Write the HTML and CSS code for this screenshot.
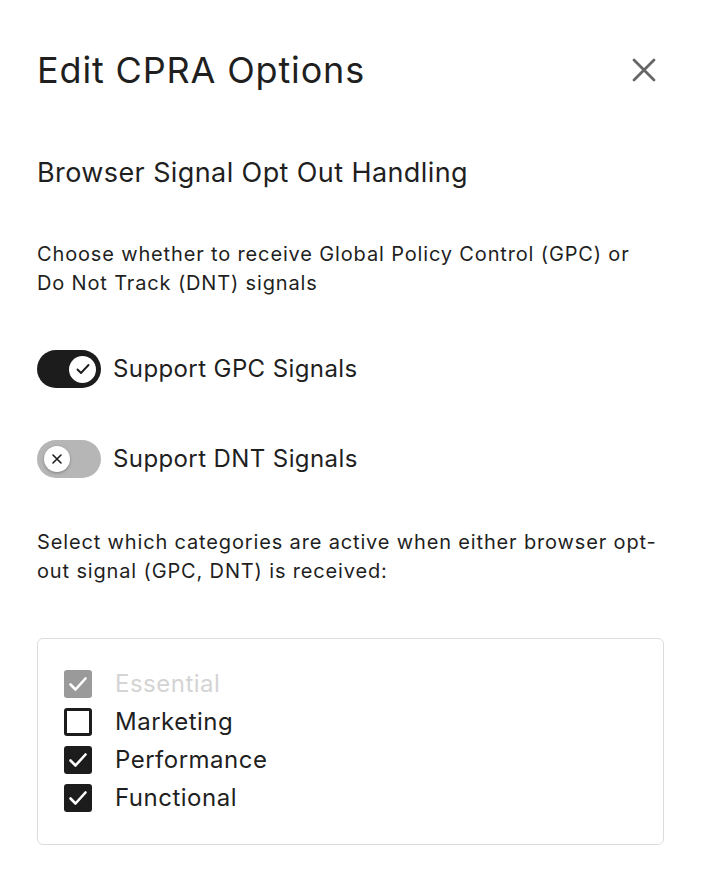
FILE: index.html
```html
<!DOCTYPE html>
<html lang="en">
<head>
<meta charset="utf-8">
<title>Edit CPRA Options</title>
<link rel="stylesheet" href="styles.css">
</head>
<body>
<div class="modal">
  <header class="modal-header">
    <h1 class="title">Edit CPRA Options</h1>
    <button class="close" aria-label="Close">
      <svg width="24" height="24" viewBox="0 0 24 24"><path d="M2 2 L22 22 M22 2 L2 22" stroke="#666" stroke-width="2.8" stroke-linecap="round" fill="none"/></svg>
    </button>
  </header>
  <h2 class="subtitle">Browser Signal Opt Out Handling</h2>
  <p class="text">Choose whether to receive Global Policy Control (GPC) or Do Not Track (DNT) signals</p>
  <div class="toggle-row">
    <span class="toggle on"><span class="knob">
      <svg width="18" height="18" viewBox="0 0 18 18"><path d="M3.5 9.5 L7 13 L14.5 5" stroke="#1c1c1c" stroke-width="1.9" fill="none" stroke-linecap="round" stroke-linejoin="round"/></svg>
    </span></span>
    <span class="toggle-label">Support GPC Signals</span>
  </div>
  <div class="toggle-row">
    <span class="toggle off"><span class="knob">
      <svg width="12" height="12" viewBox="0 0 12 12"><path d="M2 2 L10 10 M10 2 L2 10" stroke="#1c1c1c" stroke-width="1.6" fill="none" stroke-linecap="round"/></svg>
    </span></span>
    <span class="toggle-label">Support DNT Signals</span>
  </div>
  <p class="text text-2">Select which categories are active when either browser opt-out signal (GPC, DNT) is received:</p>
  <div class="box">
    <div class="check-row disabled">
      <span class="cb checked"><svg width="22" height="22" viewBox="0 0 22 22"><path d="M3.5 11.5 L8.5 16.5 L18.5 5.5" stroke="#fff" stroke-width="2.6" fill="none" stroke-linecap="round" stroke-linejoin="round"/></svg></span>
      <span class="cb-label">Essential</span>
    </div>
    <div class="check-row">
      <span class="cb"></span>
      <span class="cb-label">Marketing</span>
    </div>
    <div class="check-row">
      <span class="cb checked"><svg width="22" height="22" viewBox="0 0 22 22"><path d="M3.5 11.5 L8.5 16.5 L18.5 5.5" stroke="#fff" stroke-width="2.6" fill="none" stroke-linecap="round" stroke-linejoin="round"/></svg></span>
      <span class="cb-label">Performance</span>
    </div>
    <div class="check-row">
      <span class="cb checked"><svg width="22" height="22" viewBox="0 0 22 22"><path d="M3.5 11.5 L8.5 16.5 L18.5 5.5" stroke="#fff" stroke-width="2.6" fill="none" stroke-linecap="round" stroke-linejoin="round"/></svg></span>
      <span class="cb-label">Functional</span>
    </div>
  </div>
</div>
</body>
</html>
```
FILE: styles.css
```css
* { box-sizing: border-box; }
html, body { margin: 0; padding: 0; background: #fff; }
body {
  font-family: Inter, "Noto Sans", sans-serif;
  color: #1f1f1f;
}
.modal {
  padding: 44px 38px 0 37px;
  width: 702px;
}
.modal-header {
  display: flex;
  align-items: center;
  justify-content: space-between;
  height: 52px;
}
.title {
  margin: 0;
  font-size: 36px;
  font-weight: 400;
  line-height: 52px;
  letter-spacing: 0.85px;
}
.close {
  border: 0;
  background: none;
  padding: 0;
  margin-right: 8px;
  width: 24px;
  height: 24px;
  display: flex;
}
.subtitle {
  margin: 59px 0 0;
  font-size: 27px;
  font-weight: 400;
  line-height: 36px;
  letter-spacing: 0.4px;
}
.text {
  margin: 49px 0 0;
  font-size: 20px;
  line-height: 29px;
  width: 627px;
  letter-spacing: 0.85px;
}
.toggle-row {
  display: flex;
  align-items: center;
  gap: 12px;
  margin-top: 52px;
}
.toggle-row + .toggle-row { margin-top: 52px; }
.toggle {
  width: 64px;
  height: 38px;
  border-radius: 19px;
  display: flex;
  align-items: center;
  padding: 0 5px;
  flex: none;
}
.toggle.on { background: #1c1c1c; justify-content: flex-end; }
.toggle.off { background: #b5b6b5; justify-content: flex-start; padding-left: 7px; }
.knob {
  width: 27px;
  height: 27px;
  border-radius: 50%;
  background: #fff;
  display: flex;
  align-items: center;
  justify-content: center;
}
.toggle.off .knob { width: 26px; height: 26px; box-shadow: 0 1px 3px rgba(0,0,0,0.3); }
.toggle-label {
  font-size: 24px;
  line-height: 32px;
  letter-spacing: 0.4px;
}
.text-2 { margin-top: 50px; }
.box {
  margin-top: 52px;
  width: 627px;
  border: 1px solid #dcdcdc;
  border-radius: 6px;
  padding: 31px 26px 32px;
  display: flex;
  flex-direction: column;
  gap: 10px;
}
.check-row {
  display: flex;
  align-items: center;
  gap: 23px;
  height: 28px;
}
.cb {
  width: 28px;
  height: 28px;
  border: 3px solid #1c1c1c;
  border-radius: 3px;
  display: flex;
  align-items: center;
  justify-content: center;
  flex: none;
}
.cb.checked { background: #1c1c1c; }
.disabled .cb { background: #9a9a9a; border-color: #9a9a9a; }
.cb-label {
  font-size: 24px;
  line-height: 32px;
  letter-spacing: 0.5px;
}
.disabled .cb-label { color: #d4d4d4; }
```
